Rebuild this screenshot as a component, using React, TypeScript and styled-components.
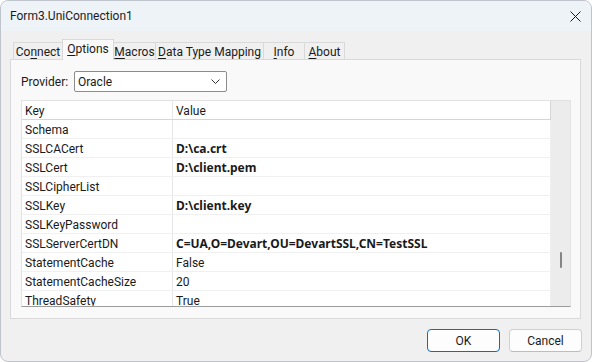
import styled, { createGlobalStyle } from "styled-components";

const GlobalStyle = createGlobalStyle`
  html, body {
    margin: 0;
    padding: 0;
    background: #ffffff;
  }
  body {
    font-family: Roboto, "Noto Sans", sans-serif;
    font-size: 12px;
    color: #1a1a1a;
  }
`;

const Window = styled.div`
  width: 592px;
  height: 362px;
  box-sizing: border-box;
  border: 1px solid #bfc3cc;
  border-radius: 8px;
  overflow: hidden;
  display: flex;
  flex-direction: column;
  background: #f0f0f0;
`;

const TitleBar = styled.div`
  height: 30px;
  flex: none;
  display: flex;
  align-items: center;
  justify-content: space-between;
  padding: 0 9px 0 9px;
  background: #eef3f8;
  font-size: 12px;
  color: #1b1b1b;
`;

const CloseButton = styled.div`
  width: 20px;
  height: 20px;
  display: flex;
  align-items: center;
  justify-content: center;
  margin-right: -3px;
`;

const Body = styled.div`
  flex: 1;
  display: flex;
  flex-direction: column;
  padding: 8px 10px 0 9px;
`;

const TabStrip = styled.div`
  height: 20px;
  display: flex;
  align-items: flex-end;
  padding-left: 3px;
  position: relative;
  z-index: 1;
`;

const Tab = styled.div<{ $w: number; $active?: boolean }>`
  box-sizing: border-box;
  width: ${(p) => p.$w}px;
  height: ${(p) => (p.$active ? 21 : 17)}px;
  margin-bottom: ${(p) => (p.$active ? -1 : 0)}px;
  margin-left: -1px;
  display: flex;
  align-items: center;
  justify-content: center;
  padding-top: 1px;
  padding-bottom: ${(p) => (p.$active ? 3 : 0)}px;
  border: 1px solid #d9d9d9;
  border-bottom: none;
  background: ${(p) => (p.$active ? "#f9f9f9" : "#f0f0f0")};
  white-space: nowrap;
  &:first-child {
    margin-left: 0;
  }
  u {
    text-underline-offset: 2px;
  }
`;

const Panel = styled.div`
  height: 260px;
  box-sizing: border-box;
  border: 1px solid #d9d9d9;
  background: #f9f9f9;
  padding: 11px 10px 0 10px;
  display: flex;
  flex-direction: column;
`;

const ProviderRow = styled.div`
  display: flex;
  align-items: center;
  height: 21px;
`;

const Label = styled.span`
  width: 52px;
  margin-right: 1px;
`;

const Combo = styled.div`
  box-sizing: border-box;
  width: 153px;
  height: 21px;
  border: 1px solid #8c8c8c;
  border-radius: 2px;
  background: #ffffff;
  display: flex;
  align-items: center;
  justify-content: space-between;
  padding: 0 6px 0 3px;
`;

const Grid = styled.div`
  margin-top: 8px;
  width: 550px;
  height: 207px;
  box-sizing: border-box;
  border: 1px solid #e2e2e2;
  border-bottom-color: #9c9c9c;
  background: #ffffff;
  display: flex;
  overflow: hidden;
`;

const Rows = styled.div`
  width: 529px;
  display: flex;
  flex-direction: column;
`;

const Row = styled.div<{ $header?: boolean }>`
  flex: none;
  height: 19px;
  box-sizing: border-box;
  display: flex;
  padding-top: 1px;
  border-bottom: 1px solid ${(p) => (p.$header ? "#d5d5d5" : "#f0f0f0")};
  border-right: 1px solid ${(p) => (p.$header ? "#d5d5d5" : "#f0f0f0")};
`;

const KeyCell = styled.div`
  width: 151px;
  padding-left: 3px;
  box-sizing: border-box;
  border-right: 1px solid #e6e6e6;
  margin-top: -1px;
  padding-top: 1px;
  display: flex;
  align-items: center;
  white-space: nowrap;
`;

const ValueCell = styled.div<{ $bold?: boolean }>`
  flex: 1;
  padding-left: 3px;
  display: flex;
  align-items: center;
  white-space: nowrap;
  font-family: ${(p) => (p.$bold ? '"Noto Sans", Roboto, sans-serif' : "inherit")};
  font-weight: ${(p) => (p.$bold ? 700 : 400)};
`;

const ScrollTrack = styled.div`
  flex: 1;
  background: #ececec;
  display: flex;
  justify-content: center;
  padding-top: 151px;
`;

const Thumb = styled.div`
  width: 2px;
  height: 16px;
  border-radius: 1px;
  background: #858585;
`;

const Footer = styled.div`
  display: flex;
  justify-content: flex-end;
  gap: 9px;
  padding-top: 10px;
  margin-right: -1px;
`;

const Button = styled.div<{ $primary?: boolean }>`
  width: 73px;
  height: 23px;
  box-sizing: border-box;
  border: 1px solid ${(p) => (p.$primary ? "#0f6cbd" : "#d0d0d0")};
  border-bottom-color: ${(p) => (p.$primary ? "#0f6cbd" : "#bdbdbd")};
  border-radius: 4px;
  background: #fdfdfd;
  display: flex;
  align-items: center;
  justify-content: center;
`;

const rows: [string, string, boolean?][] = [
  ["Schema", ""],
  ["SSLCACert", "D:\\ca.crt", true],
  ["SSLCert", "D:\\client.pem", true],
  ["SSLCipherList", ""],
  ["SSLKey", "D:\\client.key", true],
  ["SSLKeyPassword", ""],
  ["SSLServerCertDN", "C=UA,O=Devart,OU=DevartSSL,CN=TestSSL", true],
  ["StatementCache", "False"],
  ["StatementCacheSize", "20"],
  ["ThreadSafety", "True"],
];

export default function App() {
  return (
    <>
      <GlobalStyle />
      <Window>
        <TitleBar>
          <span>Form3.UniConnection1</span>
          <CloseButton>
            <svg width="11" height="11" viewBox="0 0 11 11">
              <path d="M0.5 0.5 L10.5 10.5 M10.5 0.5 L0.5 10.5" stroke="#1b1b1b" strokeWidth="1" />
            </svg>
          </CloseButton>
        </TitleBar>
        <Body>
          <TabStrip>
            <Tab $w={50}>Co<u>n</u>nect</Tab>
            <Tab $w={52} $active><u>O</u>ptions</Tab>
            <Tab $w={43}><u>M</u>acros</Tab>
            <Tab $w={109}><u>D</u>ata Type Mapping</Tab>
            <Tab $w={42}><u>I</u>nfo</Tab>
            <Tab $w={41}><u>A</u>bout</Tab>
          </TabStrip>
          <Panel>
            <ProviderRow>
              <Label>Provider:</Label>
              <Combo>
                <span>Oracle</span>
                <svg width="9" height="5" viewBox="0 0 9 5">
                  <path d="M0.5 0.5 L4.5 4.5 L8.5 0.5" stroke="#333" strokeWidth="1" fill="none" />
                </svg>
              </Combo>
            </ProviderRow>
            <Grid>
              <Rows>
                <Row $header>
                  <KeyCell>Key</KeyCell>
                  <ValueCell>Value</ValueCell>
                </Row>
                {rows.map(([k, v, b]) => (
                  <Row key={k}>
                    <KeyCell>{k}</KeyCell>
                    <ValueCell $bold={b}>{v}</ValueCell>
                  </Row>
                ))}
              </Rows>
              <ScrollTrack>
                <Thumb />
              </ScrollTrack>
            </Grid>
          </Panel>
          <Footer>
            <Button $primary>OK</Button>
            <Button>Cancel</Button>
          </Footer>
        </Body>
      </Window>
    </>
  );
}
